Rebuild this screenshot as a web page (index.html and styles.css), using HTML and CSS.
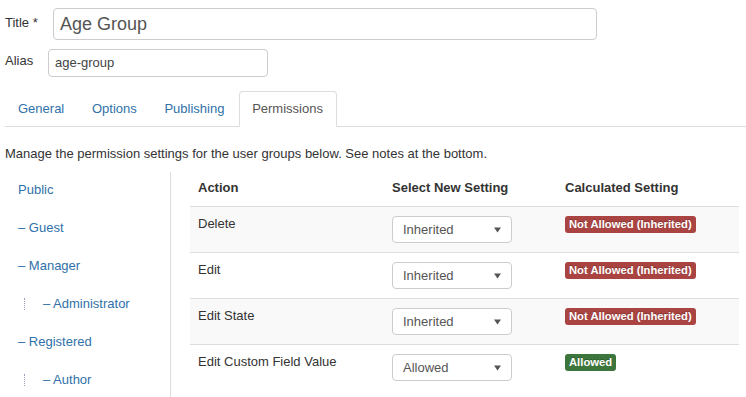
FILE: index.html
```html
<!DOCTYPE html>
<html>
<head>
<meta charset="utf-8">
<link rel="stylesheet" href="styles.css">
</head>
<body>
<div class="page">
  <div class="field-row title-row">
    <label class="field-label title-label">Title *</label>
    <div class="input title-input">Age Group</div>
  </div>
  <div class="field-row alias-row">
    <label class="field-label alias-label">Alias</label>
    <div class="input alias-input">age-group</div>
  </div>

  <ul class="tabs">
    <li class="tab first"><span>General</span></li>
    <li class="tab"><span>Options</span></li>
    <li class="tab"><span>Publishing</span></li>
    <li class="tab active"><span>Permissions</span></li>
  </ul>

  <p class="desc">Manage the permission settings for the user groups below. See notes at the bottom.</p>

  <div class="perm">
    <ul class="groups">
      <li class="group">Public</li>
      <li class="group">– Guest</li>
      <li class="group">– Manager</li>
      <li class="group sub"><span class="dots"></span>– Administrator</li>
      <li class="group">– Registered</li>
      <li class="group sub"><span class="dots"></span>– Author</li>
    </ul>

    <div class="table">
      <div class="row head">
        <div class="cell c1">Action</div>
        <div class="cell c2">Select New Setting</div>
        <div class="cell c3">Calculated Setting</div>
      </div>
      <div class="row stripe">
        <div class="cell c1">Delete</div>
        <div class="cell c2"><div class="select">Inherited<svg class="caret" width="7" height="6" viewBox="0 0 7 6"><path d="M0 0.5H7L3.5 5.5Z" fill="#555"/></svg></div></div>
        <div class="cell c3"><span class="badge red">Not Allowed (Inherited)</span></div>
      </div>
      <div class="row">
        <div class="cell c1">Edit</div>
        <div class="cell c2"><div class="select">Inherited<svg class="caret" width="7" height="6" viewBox="0 0 7 6"><path d="M0 0.5H7L3.5 5.5Z" fill="#555"/></svg></div></div>
        <div class="cell c3"><span class="badge red">Not Allowed (Inherited)</span></div>
      </div>
      <div class="row stripe">
        <div class="cell c1">Edit State</div>
        <div class="cell c2"><div class="select">Inherited<svg class="caret" width="7" height="6" viewBox="0 0 7 6"><path d="M0 0.5H7L3.5 5.5Z" fill="#555"/></svg></div></div>
        <div class="cell c3"><span class="badge red">Not Allowed (Inherited)</span></div>
      </div>
      <div class="row">
        <div class="cell c1">Edit Custom Field Value</div>
        <div class="cell c2"><div class="select">Allowed<svg class="caret" width="7" height="6" viewBox="0 0 7 6"><path d="M0 0.5H7L3.5 5.5Z" fill="#555"/></svg></div></div>
        <div class="cell c3"><span class="badge green">Allowed</span></div>
      </div>
    </div>
  </div>
</div>
</body>
</html>
```

FILE: styles.css
```css
* { box-sizing: border-box; }
html, body {
  margin: 0;
  padding: 0;
  background: #fff;
  overflow: hidden;
}
body {
  font-family: "Liberation Sans", Arial, sans-serif;
  font-size: 13px;
  line-height: 18px;
  color: #333;
}
.page {
  padding: 8px 0 0 5px;
}
.field-row {
  display: flex;
  align-items: center;
}
.field-label {
  color: #333;
}
.title-label { width: 48px; margin-top: -2px; }
.alias-label { width: 43px; margin-top: -4px; }
.input {
  border: 1px solid #ccc;
  border-radius: 4px;
  background: #fff;
  display: flex;
  align-items: center;
}
.title-input {
  width: 544px;
  height: 32px;
  font-size: 18px;
  color: #555;
  padding-left: 6px;
}
.alias-row { margin-top: 9px; }
.alias-input {
  width: 220px;
  height: 28px;
  padding-left: 6px;
  color: #444;
}

.tabs {
  list-style: none;
  margin: 14px 0 0 0;
  padding: 0;
  display: flex;
  border-bottom: 1px solid #ddd;
}
.tab {
  margin-right: 1.7px;
  margin-bottom: -1px;
  padding: 8px 12px;
  border: 1px solid transparent;
  border-radius: 4px 4px 0 0;
  color: #3071a9;
  line-height: 18px;
}
.tab.active {
  color: #555;
  background: #fff;
  border-color: #ddd #ddd transparent #ddd;
  border-bottom: 1px solid #fff;
  padding-right: 13px;
}

.desc {
  margin: 18px 0 9px 0;
}

.perm {
  display: flex;
  align-items: stretch;
}
.groups {
  list-style: none;
  margin: 0;
  padding: 1px 0 0 13px;
  width: 166px;
  border-right: 1px solid #ddd;
  flex-shrink: 0;
}
.group {
  color: #3071a9;
  padding: 8px 0 12px 0;
  line-height: 18px;
  white-space: nowrap;
  display: flex;
  align-items: center;
}
.group.sub { padding-left: 6px; }
.dots {
  display: inline-block;
  width: 1px;
  height: 12px;
  border-left: 1px dotted #9a9ab8;
  margin-right: 18px;
}

.table {
  margin-left: 19px;
  width: 549px;
}
.row {
  display: flex;
  height: 46px;
  border-top: 1px solid #ddd;
}
.row.head {
  border-top: none;
  height: 34px;
  font-weight: bold;
}
.row.stripe { background: #f9f9f9; }
.cell {
  padding: 8px;
  line-height: 18px;
}
.row.head .cell { padding-top: 7px; }
.c1 { width: 195px; }
.c2 { width: 172px; padding-left: 7px; }
.c3 { width: 182px; }

.select {
  margin-top: 1px;
  width: 120px;
  height: 27px;
  border: 1px solid #ccc;
  border-radius: 4px;
  background: #fff;
  color: #555;
  padding: 0 0 0 10px;
  display: flex;
  align-items: center;
  justify-content: space-between;
  line-height: 18px;
}
.select .caret { margin-right: 10px; margin-top: 1px; }

.badge {
  display: inline-block;
  margin-top: 1px;
  padding: 2px 4px;
  font-size: 11.25px;
  font-weight: bold;
  line-height: 13px;
  color: #fff;
  border-radius: 3px;
  white-space: nowrap;
  text-shadow: 0 -1px 0 rgba(0,0,0,0.25);
}
.badge.red { background: #a94442; }
.badge.green { background: #3c763d; }
```
